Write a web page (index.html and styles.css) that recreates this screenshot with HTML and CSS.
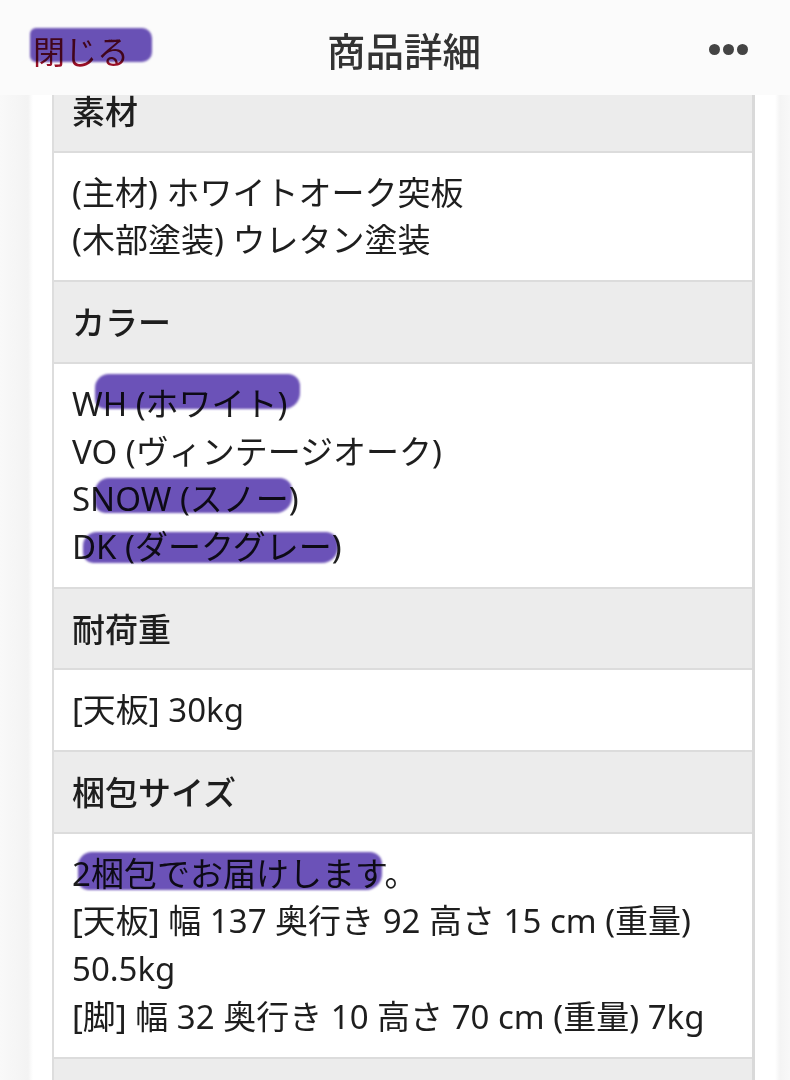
FILE: index.html
```html
<!DOCTYPE html>
<html lang="ja">
<head>
<meta charset="utf-8">
<title>商品詳細</title>
<link rel="stylesheet" href="styles.css">
</head>
<body>
<header class="topbar">
  <span class="close"><span class="close-text">閉じる</span><span class="mark mark-close"></span></span>
  <h1 class="title">商品詳細</h1>
  <span class="more"><i></i><i></i><i></i></span>
</header>
<main class="page">
  <div class="spec">
    <div class="head">素材</div>
    <div class="body">
      <div class="line">(主材) ホワイトオーク突板</div>
      <div class="line">(木部塗装) ウレタン塗装</div>
    </div>
    <div class="head">カラー</div>
    <div class="body">
      <div class="line">WH (ホワイト)<span class="mark mark-wh"></span></div>
      <div class="line">VO (ヴィンテージオーク)</div>
      <div class="line">SNOW (スノー)<span class="mark mark-snow"></span></div>
      <div class="line">DK (ダークグレー)<span class="mark mark-dk"></span></div>
    </div>
    <div class="head">耐荷重</div>
    <div class="body">
      <div class="line">[天板] 30kg</div>
    </div>
    <div class="head">梱包サイズ</div>
    <div class="body">
      <div class="line">2梱包でお届けします。<span class="mark mark-pack"></span></div>
      <div class="line">[天板] 幅 137 奥行き 92 高さ 15 cm (重量) 50.5kg</div>
      <div class="line">[脚] 幅 32 奥行き 10 高さ 70 cm (重量) 7kg</div>
    </div>
    <div class="head tail">&nbsp;</div>
  </div>
</main>
</body>
</html>
```
FILE: styles.css
```css
html, body {
  margin: 0;
  padding: 0;
}
body {
  width: 790px;
  height: 1080px;
  overflow: hidden;
  background: linear-gradient(to right, #f9f9f9 0px, #f3f3f3 28px, #ffffff 33px, #ffffff 775px, #f4f4f4 780px, #f8f8f8 790px);
  font-family: "Noto Sans", "Noto Sans CJK JP", sans-serif;
  color: #222;
}
.topbar {
  position: fixed;
  top: 0;
  left: 0;
  width: 790px;
  height: 95px;
  background: #fbfbfb;
  z-index: 5;
  display: flex;
  align-items: center;
  justify-content: space-between;
  box-sizing: border-box;
  padding: 0 15px 0 33px;
}
.close {
  position: relative;
  font-family: "Noto Sans CJK JP", sans-serif;
  font-size: 32px;
  color: #9a0f25;
  width: 120px;
  line-height: 40px;
  margin-top: 4px;
}
.title {
  margin: 0;
  font-family: "Noto Sans CJK JP", sans-serif;
  font-size: 38.5px;
  font-weight: 500;
  color: #333;
  line-height: 44px;
  margin-top: 2px;
}
.more {
  display: flex;
  gap: 3px;
  width: 120px;
  box-sizing: border-box;
  padding-right: 27px;
  justify-content: flex-end;
  margin-top: 4px;
}
.more i {
  display: block;
  width: 11px;
  height: 11px;
  border-radius: 50%;
  background: #444;
}
.page {
  width: 742px;
  margin-left: 33px;
  padding-top: 71px;
  background: #fff;
}
.spec {
  margin-left: 19px;
  width: 703px;
  box-sizing: border-box;
  border-left: 2px solid #dddddd;
  border-right: 3px solid #d9d9d9;
}
.head,
.body {
  padding: 16px 18px;
  border-bottom: 2px solid #dcdcdc;
  font-family: "Noto Sans", "Noto Sans CJK JP", sans-serif;
  font-size: 33px;
  line-height: 47.7px;
}
.head {
  background: #ececec;
  font-family: "Noto Sans CJK JP", sans-serif;
  font-weight: 500;
  font-size: 33px;
  color: #1e1e1e;
}
.tail {
  padding-bottom: 0;
  border-bottom: 0;
  height: 5px;
  overflow: hidden;
}
.body {
  background: #fff;
  color: #1e1e1e;
}
.line {
  position: relative;
}
.mark {
  position: absolute;
  display: block;
  background: #6348b4;
  mix-blend-mode: multiply;
  border-radius: 14px 12px 16px 10px;
  opacity: 0.95;
  filter: blur(0.8px);
}
.mark-close {
  left: -3px;
  top: -2px;
  width: 122px;
  height: 34px;
  border-radius: 6px 10px 10px 6px;
}
.mark-wh {
  left: 23px;
  top: -6px;
  width: 205px;
  height: 35px;
}
.mark-snow {
  left: 23px;
  top: 3px;
  width: 197px;
  height: 35px;
}
.mark-dk {
  left: 11px;
  top: 9px;
  width: 255px;
  height: 31px;
}
.mark-pack {
  left: 6px;
  top: 2px;
  width: 304px;
  height: 38px;
}
```
